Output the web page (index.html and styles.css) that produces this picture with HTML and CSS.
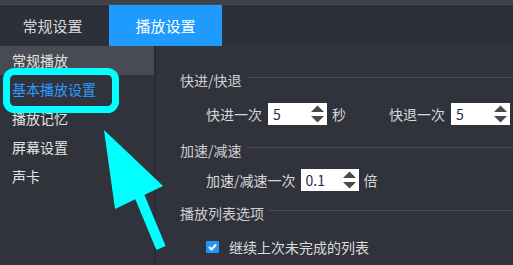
FILE: index.html
```html
<!DOCTYPE html>
<html lang="zh-CN">
<head>
    <meta charset="UTF-8">
    <title>播放设置</title>
    <link rel="stylesheet" href="styles.css">
</head>
<body>
    <div class="topstrip"></div>

    <!-- tabs -->
    <div class="tabs">
        <div class="tab">常规设置</div>
        <div class="tab active">播放设置</div>
    </div>

    <div class="main">
        <div class="sidebar">
            <div class="side-item hover">常规播放</div>
            <div class="side-item selected">基本播放设置</div>
            <div class="side-item">播放记忆</div>
            <div class="side-item">屏幕设置</div>
            <div class="side-item">声卡</div>
        </div>

        <div class="content">
            <div class="group-title first">快进/快退</div>
            <div class="row row-seek">
                <span class="label">快进一次</span>
                <div class="spin"><span class="val">5</span><svg class="arrows" width="15" height="20" viewBox="0 0 15 20"><path d="M1 8 L7.5 1.5 L14 8 Z" /><path d="M1 12 L7.5 18.5 L14 12 Z" /></svg></div>
                <span class="unit">秒</span>
                <span class="label second">快退一次</span>
                <div class="spin"><span class="val">5</span><svg class="arrows" width="15" height="20" viewBox="0 0 15 20"><path d="M1 8 L7.5 1.5 L14 8 Z" /><path d="M1 12 L7.5 18.5 L14 12 Z" /></svg></div>
                <span class="unit">秒</span>
            </div>

            <div class="group-title speed">加速/减速</div>
            <div class="row row-speed">
                <span class="label">加速/减速一次</span>
                <div class="spin small"><span class="val">0.1</span><svg class="arrows" width="15" height="20" viewBox="0 0 15 20"><path d="M1 8 L7.5 1.5 L14 8 Z" /><path d="M1 12 L7.5 18.5 L14 12 Z" /></svg></div>
                <span class="unit">倍</span>
            </div>

            <div class="group-title list">播放列表选项</div>
            <div class="row row-check">
                <span class="check"><svg width="13" height="12" viewBox="0 0 13 12"><path d="M3 6 L5.5 8.5 L10 3.5" fill="none" stroke="#fff" stroke-width="2" /></svg></span>
                <span class="check-label">继续上次未完成的列表</span>
            </div>
        </div>
    </div>

    <!-- annotation drawn over the window -->
    <svg class="annotation" width="513" height="265" viewBox="0 0 513 265">
        <rect x="6.5" y="71.5" width="109" height="38" rx="8" fill="none" stroke="#00ffff" stroke-width="7" />
        <polygon points="104,130 163,186 115,209" fill="#00ffff" />
        <line x1="139" y1="195" x2="161" y2="248" stroke="#00ffff" stroke-width="10" />
    </svg>
</body>
</html>
```

FILE: styles.css
```css
body {
    margin: 0;
    width: 513px;
    height: 265px;
    overflow: hidden;
    position: relative;
    background-color: #30333b;
    font-family: "Noto Sans CJK SC", "Microsoft YaHei", sans-serif;
    font-size: 14px;
    color: #d4d4d4;
}
.topstrip {
    height: 4px;
    background-color: #3f424a;
    border-bottom: 1px solid #474a52;
}
.tabs {
    display: flex;
    height: 41px;
    background-color: #2d3038;
}
.tab {
    width: 105px;
    margin-right: 4px;
    text-align: center;
    line-height: 41px;
    font-size: 15px;
    color: #d8d8d8;
}
.tab.active {
    width: 113px;
    background-color: #1f9bfd;
    color: #ffffff;
}
.main {
    display: flex;
    height: 219px;
}
.sidebar {
    width: 154px;
    border-right: 2px solid #282b32;
    flex-shrink: 0;
}
.side-item {
    height: 29px;
    line-height: 29px;
    padding-left: 12px;
    color: #e2e2e2;
}
.side-item.hover {
    background-color: #484b53;
}
.side-item.selected {
    color: #2e9cff;
}
.content {
    flex: 1;
    padding-left: 24px;
    white-space: nowrap;
}
.group-title {
    display: flex;
    height: 20px;
    line-height: 20px;
    color: #cfcfcf;
}
.group-title::after {
    content: "";
    flex: 1;
    height: 1px;
    margin-top: 7px;
    margin-left: 5px;
    background-color: #4a4d55;
}
.group-title.first {
    margin-top: 24px;
}
.group-title.speed {
    margin-top: 15px;
}
.group-title.list {
    margin-top: 12px;
}
.row {
    display: flex;
    align-items: center;
    height: 22px;
    padding-left: 26px;
}
.row-seek {
    margin-top: 13px;
}
.row-speed {
    margin-top: 9px;
}
.row-check {
    margin-top: 13px;
}
.label {
    color: #d8d8d8;
}
.label.second {
    margin-left: 43px;
}
.spin {
    display: flex;
    align-items: center;
    justify-content: space-between;
    width: 59px;
    height: 22px;
    margin-left: 6px;
    padding: 0 2px 0 5px;
    box-sizing: border-box;
    background-color: #ffffff;
    color: #1c2a4a;
    flex-shrink: 0;
}
.spin.small {
    width: 58px;
    margin-left: 5px;
}
.arrows path {
    fill: #4a4a4a;
}
.unit {
    margin-left: 5px;
    color: #d8d8d8;
}
.check {
    display: flex;
    width: 13px;
    height: 12px;
    background-color: #2196f3;
    border-radius: 1px;
}
.check-label {
    margin-left: 10px;
    color: #dcdcdc;
}
.annotation {
    position: absolute;
    top: 0;
    left: 0;
    pointer-events: none;
}
```
